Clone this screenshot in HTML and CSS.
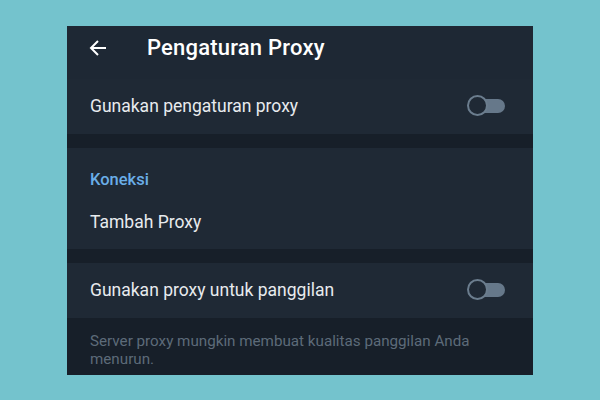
FILE: index.html
```html
<!DOCTYPE html>
<html lang="id">
<head>
    <meta charset="UTF-8">
    <meta name="viewport" content="width=device-width, initial-scale=1.0">
    <title>Pengaturan Proxy</title>
    <link rel="stylesheet" href="styles.css">
</head>
<body>
    <div class="phone">
        <header class="topbar">
            <svg class="back" width="18" height="18" viewBox="0 0 18 18">
                <path d="M17 9H2.5M9 2L2 9l7 7" fill="none" stroke="#fff" stroke-width="2"/>
            </svg>
            <h1>Pengaturan Proxy</h1>
        </header>

        <div class="row">
            <span>Gunakan pengaturan proxy</span>
            <span class="toggle"></span>
        </div>

        <div class="divider"></div>

        <section class="group">
            <p class="group-title">Koneksi</p>
            <p class="group-item">Tambah Proxy</p>
        </section>

        <div class="divider"></div>

        <div class="row">
            <span>Gunakan proxy untuk panggilan</span>
            <span class="toggle"></span>
        </div>

        <p class="info">Server proxy mungkin membuat kualitas panggilan Anda menurun.</p>
    </div>
</body>
</html>
```

FILE: styles.css
```css
/* Latar */
body {
    margin: 0;
    min-height: 100vh;
    background: #74c3cd;
    font-family: Roboto, "Liberation Sans", sans-serif;
    display: flex;
    justify-content: center;
    align-items: center;
}

.phone {
    width: 466px;
    height: 349px;
    background: #171f29;
    overflow: hidden;
}

.topbar {
    height: 53px;
    box-sizing: border-box;
    padding: 0 0 9px 22px;
    background: #1e2834;
    display: flex;
    align-items: center;
}

.topbar .back {
    margin-right: 40px;
}

.topbar h1 {
    margin: 0;
    font-size: 22px;
    font-weight: 500;
    letter-spacing: 0.2px;
    color: #fff;
}

.row {
    height: 55px;
    background: #1f2935;
    display: flex;
    align-items: center;
    justify-content: space-between;
    padding: 0 28px 0 23px;
    font-size: 17.5px;
    color: #e8ebee;
}

/* Sakelar mati */
.toggle {
    position: relative;
    width: 30px;
    height: 14px;
    border-radius: 7px;
    background: #66788a;
}

.toggle::before {
    content: "";
    position: absolute;
    left: -8px;
    top: -4px;
    width: 17px;
    height: 17px;
    border-radius: 50%;
    border: 2px solid #6b7d8e;
    background: #1f2935;
}

.divider {
    height: 14px;
    background: #171f29;
}

.group {
    height: 101px;
    box-sizing: border-box;
    padding: 22px 23px 0;
    background: #1f2935;
}

.group-title {
    margin: 0;
    font-size: 16.5px;
    line-height: 20px;
    font-weight: 500;
    color: #6aaee8;
}

.group-item {
    margin: 21px 0 0;
    font-size: 17.5px;
    line-height: 22px;
    color: #e8ebee;
}

.info {
    margin: 0;
    padding: 14px 40px 0 23px;
    font-size: 15.2px;
    line-height: 18px;
    color: #5d6b79;
}
```
